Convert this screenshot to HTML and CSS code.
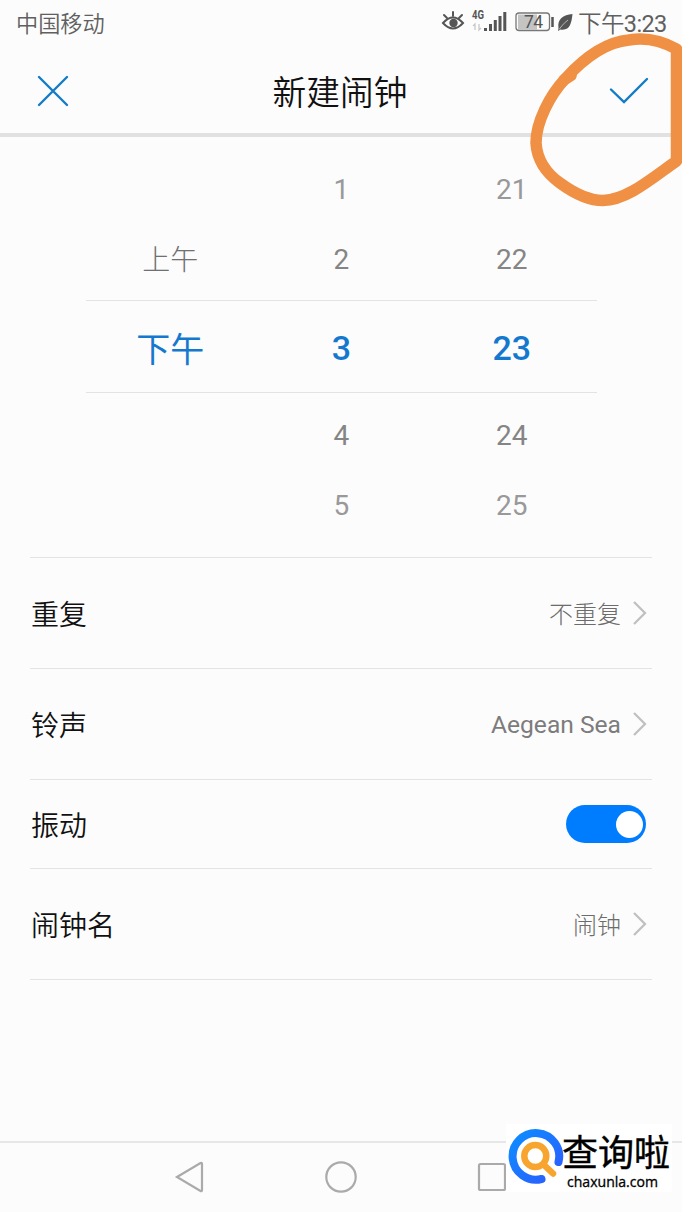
FILE: index.html
```html
<!DOCTYPE html>
<html lang="zh-CN">
<head>
<meta charset="utf-8">
<title>新建闹钟</title>
<link rel="stylesheet" href="styles.css">
</head>
<body>
<main class="screen">
  <div class="status">
    <span class="carrier">中国移动</span>
    <svg class="status-icons" width="136" height="32" viewBox="0 0 136 32">
      <g fill="none" stroke="#555" stroke-width="2" stroke-linecap="round">
        <path d="M3 17Q13 6 23 17Q13 28 3 17Z"/>
        <path d="M4 9l3 3M13 6v4M22 9l-3 3"/>
      </g>
      <circle cx="13.500" cy="17" r="4.200" fill="#555"/>
      <text class="net" x="32" y="13" textLength="12" lengthAdjust="spacingAndGlyphs">4G</text>
      <path d="M35 24v-6l-2 2M39 18v6l2-2" fill="none" stroke="#c8c8c8" stroke-width="1.300"/>
      <path d="M45.500 25v-3M50.500 25v-7M55.300 25v-11M60 25V10M64.800 25V6" fill="none" stroke="#555" stroke-width="3"/>
      <rect x="78" y="8.500" width="19" height="15" fill="#c4c4c4"/>
      <rect x="76" y="7" width="33.500" height="17.500" rx="3" fill="none" stroke="#777" stroke-width="1.300"/>
      <text class="battery" x="93.500" y="22" text-anchor="middle" textLength="19">74</text>
      <path d="M112.500 11v10" stroke="#555" stroke-width="2.500"/>
      <path d="M132.500 8C123 9 117 13 118.500 22L118 25L120.500 23.500C130 25 131.500 17 132.500 8Z" fill="#555"/>
      <path d="M119 23.500Q123 17.500 128 14" fill="none" stroke="#ccc" stroke-width="0.800"/>
    </svg>
    <span class="time">下午<span class="digits">3:23</span></span>
  </div>
  <header class="header">
    <svg width="34" height="34" viewBox="0 0 34 34"><path d="M3 3L31 31M31 3L3 31" fill="none" stroke="#147cc6" stroke-width="2.400" stroke-linecap="round"/></svg>
    <h1 class="title">新建闹钟</h1>
    <svg width="40" height="30" viewBox="0 0 40 30"><path d="M2 13.500L15 26L38 3" fill="none" stroke="#147cc6" stroke-width="2.400" stroke-linecap="round"/></svg>
  </header>
  <section class="picker">
    <div class="tick far"><span></span><span>1</span><span>21</span></div>
    <div class="tick"><span class="cn">上午</span><span>2</span><span>22</span></div>
    <div class="tick current"><span class="cn">下午</span><span>3</span><span>23</span></div>
    <div class="tick below"><span></span><span>4</span><span>24</span></div>
    <div class="tick far"><span></span><span>5</span><span>25</span></div>
  </section>
  <section class="options">
    <div class="row"><span class="label">重复</span><span class="value">不重复</span><svg class="arrow" width="16" height="26" viewBox="0 0 16 26"><path d="M2 2L13 13L2 24"/></svg></div>
    <div class="row"><span class="label">铃声</span><span class="value latin">Aegean Sea</span><svg class="arrow" width="16" height="26" viewBox="0 0 16 26"><path d="M2 2L13 13L2 24"/></svg></div>
    <div class="row short"><span class="label">振动</span><span class="toggle"><span class="knob"></span></span></div>
    <div class="row"><span class="label">闹钟名</span><span class="value">闹钟</span><svg class="arrow" width="16" height="26" viewBox="0 0 16 26"><path d="M2 2L13 13L2 24"/></svg></div>
  </section>
  <nav class="nav">
    <svg width="32" height="36" viewBox="0 0 32 36"><path d="M4 18L27.500 4Q29 3.500 29 5V31Q29 32.500 27.500 32Z"/></svg>
    <svg width="32" height="36" viewBox="0 0 32 36"><circle cx="16" cy="18" r="14.700"/></svg>
    <svg width="32" height="36" viewBox="0 0 32 36"><rect x="3" y="5" width="26" height="26" rx="1.500"/></svg>
  </nav>
  <svg class="marker" width="162" height="180" viewBox="520 30 162 180">
    <path d="M676.500 49C662 41 646 37 629 40C606 42 584 58 565 79C550 95 536 122 536 143C537 159 546 173 560 183C575 194 590 200.500 603 200.500C627 200 651 179 676.500 161V49"/>
    <path d="M564 80L571 75.500"/>
  </svg>
  <div class="watermark">
    <svg class="logo" width="56" height="58" viewBox="508 1127 56 58">
      <defs><linearGradient id="blue" x1="0" y1="0" x2="1" y2="1"><stop offset="0" stop-color="#0d8dff"/><stop offset="1" stop-color="#2c5cff"/></linearGradient></defs>
      <g fill="none" stroke-linecap="round">
        <path d="M541.500 1179A23.300 23.300 0 1 1 558.500 1162" stroke="url(#blue)" stroke-width="8"/>
        <circle cx="535.300" cy="1156" r="11" stroke="#f8a530" stroke-width="6.500"/>
        <path d="M544 1165L553 1173.500" stroke="#f8a530" stroke-width="6.500"/>
      </g>
    </svg>
    <div class="brand"><span class="brand-cn">查询啦</span><svg class="brand-url" width="104" height="22"><text x="5" y="16" textLength="91" lengthAdjust="spacingAndGlyphs">chaxunla.com</text></svg></div>
  </div>
</main>
</body>
</html>
```
FILE: styles.css
```css
* { box-sizing: border-box; }
body { margin: 0; background: #fcfcfc; }
svg { display: block; flex: none; }
.screen {
  position: relative;
  width: 682px;
  height: 1212px;
  overflow: hidden;
  display: flex;
  flex-direction: column;
  background: #fcfcfc;
  color: #111;
  font-family: Roboto, "Noto Sans CJK SC", sans-serif;
}
.status {
  height: 46px;
  padding: 0 15px 2px 16px;
  display: flex;
  align-items: center;
  color: #606060;
  font-size: 22.200px;
}
.carrier { flex: 1; font-weight: 350; }
.status-icons { margin-right: 2px; }
.net { font: bold 12px Roboto, sans-serif; fill: #555; }
.battery { font: 17.500px Roboto, sans-serif; fill: #555; }
.time { font-size: 23.500px; font-weight: 350; width: 89px; white-space: nowrap; letter-spacing: -0.600px; }
.digits { font-weight: 400; }
.header {
  height: 91px;
  padding: 3px 33px 0 36px;
  border-bottom: 4px solid #e1e1e1;
  display: flex;
  align-items: center;
  justify-content: space-between;
}
.title { margin: 0; padding: 5px 0 0 1px; font-size: 33.700px; font-weight: 350; line-height: 44px; }
.picker { width: 511px; margin: 17px 0 0 86px; height: 403px; }
.tick {
  height: 70px;
  display: grid;
  grid-template-columns: repeat(3, 1fr);
  align-items: center;
  text-align: center;
  font-size: 28px;
  line-height: 40px;
  padding-top: 2px;
  color: #858585;
}
.tick .cn { font-weight: 300; padding-top: 2px; margin-left: -2px; color: #707070; }
.far { color: #999; }
.current {
  height: 93px;
  margin-top: 6px;
  border: solid #e3e3e3;
  border-width: 1px 0;
  color: #1479ce;
  font-size: 34px;
  font-weight: 500;
}
.tick.current .cn { font-weight: 400; color: inherit; padding-top: 4px; }
.below { margin-top: 7px; }
.options { margin: 0 30px; border-top: 1px solid #e3e3e3; }
.row {
  height: 111px;
  border-bottom: 1px solid #e3e3e3;
  display: flex;
  align-items: center;
  padding-right: 4px;
}
.short { height: 89px; padding-right: 6px; }
.label { flex: 1; font-size: 28px; font-weight: 350; padding-left: 1px; }
.value { font-size: 24px; font-weight: 300; color: #6c6c6c; margin: -2px 11px 0 0; }
.latin { font-size: 24.600px; font-weight: 400; margin-top: 1px; color: #7c7c7c; }
.arrow path { fill: none; stroke: #c0c0c0; stroke-width: 2.300; }
.toggle { width: 80px; height: 38px; padding: 5.500px 3px; border-radius: 19px; background: #007dff; display: flex; justify-content: flex-end; }
.knob { width: 27px; height: 27px; border-radius: 50%; background: #fff; }
.nav {
  margin-top: auto;
  height: 71px;
  border-top: 2px solid #e7e7e7;
  padding: 0 174px 2px 173px;
  display: flex;
  align-items: center;
  justify-content: space-between;
}
.nav svg { fill: none; stroke: #aaa; stroke-width: 2.200; }
.marker { position: absolute; left: 520px; top: 30px; fill: none; stroke: #f09044; stroke-width: 11.500; stroke-linecap: round; stroke-linejoin: round; }
.watermark {
  position: absolute;
  left: 506px;
  top: 1124px;
  width: 166px;
  height: 68px;
  padding: 3px 0 0 2px;
  display: flex;
  background: #fff;
  color: #000;
}
.brand { display: flex; flex-direction: column; margin-left: -2px; }
.brand-cn { font: 400 36px/44px "Noto Sans CJK SC", sans-serif; white-space: nowrap; -webkit-text-stroke: 0.400px #000; padding-top: 1px; }
.brand-url { font: 14px "Open Sans", sans-serif; fill: #000; stroke: #000; stroke-width: 0.300px; margin-top: -1px; }
```
